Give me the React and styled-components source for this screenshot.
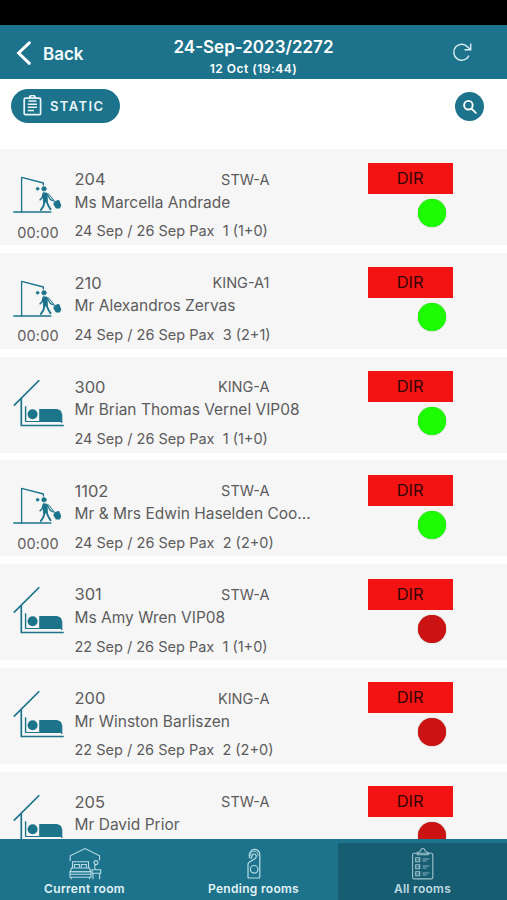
import React from 'react'
import styled, { createGlobalStyle } from 'styled-components';

const rooms = [
    { id: 1, number: '204', type: 'STW-A', guest: 'Ms Marcella Andrade', dates: '24 Sep / 26 Sep', pax: '1 (1+0)', time: '00:00', ready: true },
    { id: 2, number: '210', type: 'KING-A1', guest: 'Mr Alexandros Zervas', dates: '24 Sep / 26 Sep', pax: '3 (2+1)', time: '00:00', ready: true },
    { id: 3, number: '300', type: 'KING-A', guest: 'Mr Brian Thomas Vernel VIP08', dates: '24 Sep / 26 Sep', pax: '1 (1+0)', ready: true },
    { id: 4, number: '1102', type: 'STW-A', guest: 'Mr & Mrs Edwin Haselden Coo...', dates: '24 Sep / 26 Sep', pax: '2 (2+0)', time: '00:00', ready: true },
    { id: 5, number: '301', type: 'STW-A', guest: 'Ms Amy Wren VIP08', dates: '22 Sep / 26 Sep', pax: '1 (1+0)', ready: false },
    { id: 6, number: '200', type: 'KING-A', guest: 'Mr Winston Barliszen', dates: '22 Sep / 26 Sep', pax: '2 (2+0)', ready: false },
    { id: 7, number: '205', type: 'STW-A', guest: 'Mr David Prior', ready: false },
]

const BackIcon = () => (
    <svg width="16" height="26" viewBox="0 0 16 26" fill="none" stroke="#fff" strokeWidth="3" strokeLinecap="round">
        <path d="M13.3 1.8 2.6 12l10.7 10.3" />
    </svg>
)

const RefreshIcon = () => (
    <svg width="20" height="20" viewBox="0 0 20 20" fill="none" stroke="#d9eef3" strokeWidth="1.4">
        <path d="M17 13.6A8 8 0 1 1 16 5.2l2.3 2.4" />
        <path d="M18.7 1.6v6.2h-6.2" />
    </svg>
)

const ClipboardIcon = () => (
    <svg width="19" height="21" viewBox="0 0 19 21" fill="none" stroke="#e6f4f7" strokeWidth="1.7">
        <rect x="1.2" y="3.2" width="16.4" height="16.4" rx="1.2" />
        <path d="M6.5 3.2a2.9 2.9 0 0 1 5.8 0" />
        <path d="M5.4 6h8M4.8 9.2h9.2M4.8 12.3h9.2M4.8 15.5h6.2" strokeWidth="1.5" />
    </svg>
)

const SearchIcon = () => (
    <svg width="16" height="16" viewBox="0 0 16 16" fill="none" stroke="#fff" strokeWidth="1.9" strokeLinecap="round">
        <circle cx="6.4" cy="6.2" r="4.3" />
        <path d="m9.8 9.8 4 4" />
    </svg>
)

const CheckoutIcon = () => (
    <svg width="52" height="50" viewBox="-1 -1 52 50" fill="none" stroke="#1c748b" strokeLinecap="round" strokeLinejoin="round">
        <path d="M8.6 39V4.3L30.4 10v2" strokeWidth="1.3" />
        <path d="M.8 39h37" strokeWidth="1.4" />
        <g fill="#1c748b">
            <circle cx="24.6" cy="15.7" r="1.5" strokeWidth=".4" />
            <circle cx="31" cy="15.8" r="2.3" strokeWidth=".6" />
            <path d="m30.6 20 3.2.4.3 7.8-3.4.6z" strokeWidth="1.5" />
            <path d="m43.2 28.7 2.4-.7 1.6 4.3-1 2.2-2.6.1-2.3-3.7z" strokeWidth="2" />
        </g>
        <path d="m30.3 20.5-1.2 4.2-2 2.1" strokeWidth="1.5" />
        <path d="m34.4 21.5 2.9 4.9 3 1.6" strokeWidth="1.3" />
        <path d="m31.6 28.8-1.2 4.2-2.5 4M33.6 28.5l1.8 4.2 2.1 3.5" strokeWidth="1.9" />
        <path d="m35.4 20.6 6.6 8.2" strokeWidth="1" />
    </svg>
)

const BedIcon = () => (
    <svg width="52" height="50" viewBox="-1 1 52 50" fill="none" stroke="#1c748b">
        <path d="M.8 26.6 26.3 1.2" strokeWidth="1.6" />
        <path d="M8.3 19.5v27h42.4" strokeWidth="1.7" />
        <path d="M12.6 27.2v15.4" strokeWidth="1.4" />
        <path d="M12.6 42.5h36" strokeWidth="1" />
        <circle cx="19.6" cy="35.3" r="5" fill="#1c748b" stroke="none" />
        <path d="M26.2 30.1H43.5q4.5.3 5.3 4.2v8.3l-22.6-.7z" fill="#1c748b" stroke="none" />
        <path d="M48.7 35v9" strokeWidth="1.2" />
    </svg>
)

const CurrentRoomIcon = () => (
    <svg width="34" height="34" viewBox="0 0 34 34" fill="none" stroke="#b9dce6" strokeWidth="1.1">
        <path d="M2.2 14V8.8L17 1.6l14.6 7.2v4.4" />
        <path d="M4.5 21v-6.2h16V21M6.5 20.5v-3h5v3M13.3 20.5v-3h5v3" />
        <path d="M3.4 21h18.2l1 3.8H2.3z" />
        <path d="M2 24.8h21v5.4H2zM2 27.2h21M3.3 30v2.3M21.5 30v2.3" />
        <circle cx="28" cy="15.6" r="2" />
        <path d="M28 17.6q-2.6 2-.4 4.4M24 22.8h8.7v3.4H24zM25 26.2v6M31.6 26.2v6" />
    </svg>
)

const PendingIcon = () => (
    <svg width="16" height="32" viewBox="0 0 16 32" fill="none" stroke="#b9dce6" strokeWidth="1.2" strokeLinejoin="round">
        <path d="M2 29V16.3q0-1.3 1.2-2l6-3.9q1.3-1 1-2.7-.5-1.7-2.2-1.7-1.5 0-2 2l-.3 1.6q-1.4 1-2.2-.3-.6-1.6.1-3.6Q5 1.4 8.6 1.3q5.2.3 5.2 6V29q0 1-1 1H3q-1 0-1-1z" />
        <circle cx="8.2" cy="21.3" r="3.8" />
        <path d="M4.6 8c0-3.1 1.2-4.6 3.7-4.6s4.2 2 3.6 5" strokeWidth=".8" />
    </svg>
)

const AllRoomsIcon = () => (
    <svg width="24" height="34" viewBox="0 0 24 34" fill="none" stroke="#9fc3ce" strokeWidth="1.1">
        <rect x="1.6" y="6.3" width="20.2" height="25.6" rx="1.5" />
        <path d="M6.3 7.7V5.6q2.5-.5 3.3-1.8.3-2.3 2.2-2.3T14 3.8q.8 1.3 3.3 1.8v2.1z" />
        <path d="M4.7 10.8h4v4h-4zM4.7 17.7h4v4h-4zM4.7 24.7h4v4h-4z" />
        <path d="m5.5 12.5 1 1 2.5-2.4M5.5 19.4l1 1 2.5-2.4M5.5 26.4l1 1 2.5-2.4" strokeWidth=".8" />
        <path d="M11.5 12h7M11.5 14h4.3M11.5 19h7M11.5 21h4.3M11.5 26h7M11.5 28h4.3" strokeWidth=".8" />
    </svg>
)

const RoomCard = ({ room }) => {
    return (
        <Card>
            <Situation>
                {room.time ? <CheckoutIcon /> : <BedIcon />}
                {room.time && <Time>{room.time}</Time>}
            </Situation>
            <Info>
                <RoomLine>
                    <RoomNumber>{room.number}</RoomNumber>
                    <RoomType>{room.type}</RoomType>
                </RoomLine>
                <Guest>{room.guest}</Guest>
                {room.dates && <Stay>{room.dates} Pax{'  '}{room.pax}</Stay>}
            </Info>
            <Status>
                <Tag>DIR</Tag>
                <Dot $ready={room.ready} />
            </Status>
        </Card>
    )
}

const App = () => {
    return (
        <>
            <GlobalStyle />
            <Screen>
                <StatusBar />
                <Header>
                    <BackButton><BackIcon />Back</BackButton>
                    <Heading>
                        <Title>24-Sep-2023/2272</Title>
                        <Subtitle>12 Oct (19:44)</Subtitle>
                    </Heading>
                    <RefreshButton title="Refresh"><RefreshIcon /></RefreshButton>
                </Header>
                <Toolbar>
                    <StaticButton><ClipboardIcon />STATIC</StaticButton>
                    <SearchButton title="Search"><SearchIcon /></SearchButton>
                </Toolbar>
                <List>
                    {rooms.map((room) => <RoomCard key={room.id} room={room} />)}
                </List>
                <TabBar>
                    <Tab><CurrentRoomIcon />Current room</Tab>
                    <Tab><PendingIcon />Pending rooms</Tab>
                    <Tab $active><AllRoomsIcon />All rooms</Tab>
                </TabBar>
            </Screen>
        </>
    )
}

export default App;

const GlobalStyle = createGlobalStyle`
    *{
        box-sizing: border-box;
    }
    body{
        margin: 0;
        background-color: #fff;
        font-family: Inter, 'Liberation Sans', sans-serif;
    }
    button{
        border: none;
        margin: 0;
        padding: 0;
        background: none;
        font-family: inherit;
        cursor: pointer;
    }
    svg{
        display: block;
        flex-shrink: 0;
    }
`

const Screen = styled.div`
    display: flex;
    flex-direction: column;
    width: 507px;
    height: 900px;
    overflow: hidden;
`

const StatusBar = styled.div`
    flex: 0 0 25px;
    background-color: #000;
`

const Header = styled.header`
    display: grid;
    grid-template-columns: 120px 1fr 120px;
    flex: 0 0 54px;
    background-color: #1c738b;
    color: #fff;
`

const BackButton = styled.button`
    display: flex;
    align-items: center;
    gap: 11px;
    padding-left: 16px;
    padding-top: 3px;
    color: #f4fbfc;
    font-size: 17px;
    font-weight: 600;
`

const Heading = styled.div`
    display: flex;
    flex-direction: column;
    align-items: center;
    padding-top: 11px;
    white-space: nowrap;
`

const Title = styled.h1`
    margin: 0;
    font-size: 17px;
    font-weight: 600;
    line-height: 22px;
`

const Subtitle = styled.div`
    font-size: 12px;
    font-weight: 600;
    line-height: 16px;
    margin-top: 3px;
    letter-spacing: 0.5px;
`

const RefreshButton = styled.button`
    display: flex;
    justify-content: flex-end;
    align-items: center;
    padding-right: 35px;
`

const Toolbar = styled.div`
    display: flex;
    justify-content: space-between;
    align-items: center;
    flex: 0 0 70px;
    padding: 0 23px 17px 10.5px;
`

const StaticButton = styled.button`
    display: flex;
    align-items: center;
    gap: 8px;
    width: 109px;
    height: 34px;
    padding-left: 12.5px;
    border-radius: 17px;
    background-color: #1c738b;
    color: #e9f5f8;
    font-size: 13px;
    font-weight: 600;
    letter-spacing: 1.4px;
`

const SearchButton = styled.button`
    display: flex;
    align-items: center;
    justify-content: center;
    width: 29px;
    height: 29px;
    margin-top: 2px;
    border-radius: 50%;
    background-color: #1c738b;
`

const List = styled.main`
    display: flex;
    flex-direction: column;
    flex: 1;
    gap: 7.8px;
    min-height: 0;
    overflow: hidden;
`

const Card = styled.article`
    display: flex;
    flex: 0 0 96px;
    background-color: #f6f6f6;
    color: #5c5c5c;
`

const Situation = styled.div`
    display: flex;
    flex-direction: column;
    align-items: center;
    width: 74.5px;
    padding-top: 23px;
    padding-left: 1.5px;
`

const Time = styled.span`
    margin-top: 0.6px;
    font-size: 14.5px;
    line-height: 20px;
    letter-spacing: 0.1px;
`

const Info = styled.div`
    display: flex;
    flex-direction: column;
    width: 293.2px;
    padding-top: 18.7px;
    white-space: nowrap;
`

const RoomLine = styled.div`
    display: flex;
    justify-content: space-between;
    align-items: center;
    width: 195px;
    height: 23px;
`

const RoomNumber = styled.span`
    font-size: 16.5px;
`

const RoomType = styled.span`
    font-size: 14.5px;
`

const Guest = styled.div`
    margin-top: 1px;
    font-size: 15.5px;
    line-height: 22px;
`

const Stay = styled.div`
    margin-top: 7.8px;
    font-size: 14.5px;
    line-height: 20px;
    white-space: pre;
`

const Status = styled.div`
    display: flex;
    flex-direction: column;
    align-items: flex-end;
    gap: 5px;
    width: 85px;
    padding-top: 14.4px;
`

const Tag = styled.div`
    width: 85px;
    height: 31px;
    background-color: #f41313;
    color: #350606;
    font-size: 16.5px;
    line-height: 31px;
    text-align: center;
`

const Dot = styled.div`
    width: 28px;
    height: 28px;
    margin-right: 6.5px;
    border-radius: 50%;
    background-color: ${({ $ready }) => $ready ? '#1dfc03' : '#cb1313'};
    box-shadow: 0 0 1px ${({ $ready }) => $ready ? '#2b9c22' : '#8f1a1a'};
`

const TabBar = styled.nav`
    display: grid;
    grid-template-columns: repeat(3, 1fr);
    flex: 0 0 61px;
    padding-top: 4px;
    background-color: #1c738b;
`

const Tab = styled.button`
    display: grid;
    grid-template-rows: 38px 14px;
    justify-items: center;
    align-items: center;
    align-content: start;
    background-color: ${({ $active }) => $active ? '#175d71' : 'transparent'};
    color: ${({ $active }) => $active ? '#bfdae2' : '#e2f2f6'};
    font-size: 12px;
    font-weight: 600;
    letter-spacing: 0.3px;

    svg{
        margin: 3px 0 0 1px;
    }
`
